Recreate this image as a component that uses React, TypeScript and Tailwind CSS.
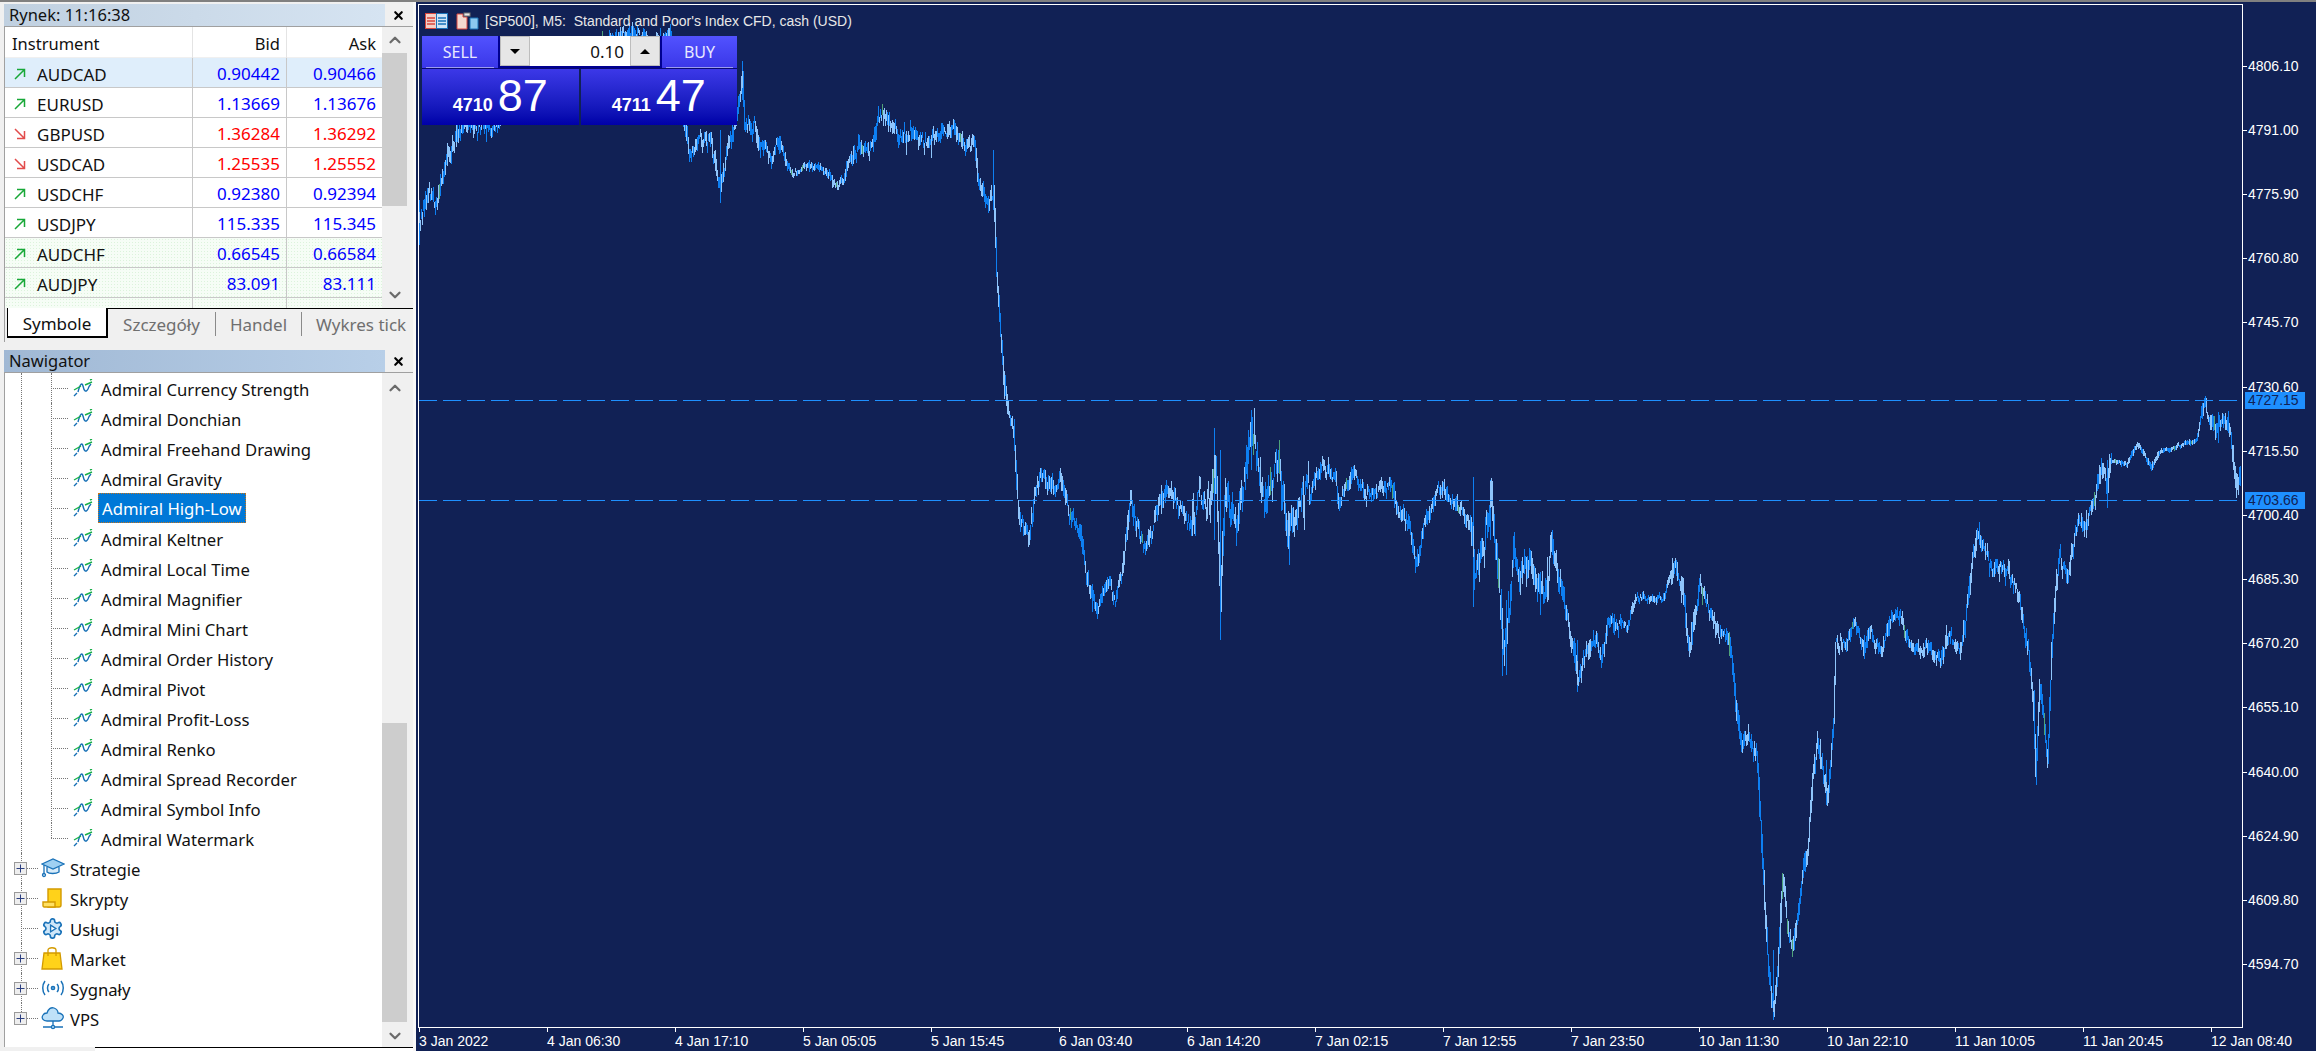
import { ChevronDown, ChevronUp, X } from "lucide-react";

type Quote = {
  symbol: string;
  bid: string;
  ask: string;
  dir: "up" | "down";
  bg?: string;
};

const dotted = "bg-[#f6fdf6] bg-[radial-gradient(#dcf3dc_1px,transparent_1px)] bg-[length:3px_3px]";

const quotes: Quote[] = [
  { symbol: "AUDCAD", bid: "0.90442", ask: "0.90466", dir: "up", bg: "bg-[#dfeefb]" },
  { symbol: "EURUSD", bid: "1.13669", ask: "1.13676", dir: "up" },
  { symbol: "GBPUSD", bid: "1.36284", ask: "1.36292", dir: "down" },
  { symbol: "USDCAD", bid: "1.25535", ask: "1.25552", dir: "down" },
  { symbol: "USDCHF", bid: "0.92380", ask: "0.92394", dir: "up" },
  { symbol: "USDJPY", bid: "115.335", ask: "115.345", dir: "up" },
  { symbol: "AUDCHF", bid: "0.66545", ask: "0.66584", dir: "up", bg: dotted },
  { symbol: "AUDJPY", bid: "83.091", ask: "83.111", dir: "up", bg: dotted },
  { symbol: "AUDNZD", bid: "1.06888", ask: "1.06868", dir: "down", bg: dotted },
];

const indicators = [
  "Admiral Currency Strength",
  "Admiral Donchian",
  "Admiral Freehand Drawing",
  "Admiral Gravity",
  "Admiral High-Low",
  "Admiral Keltner",
  "Admiral Local Time",
  "Admiral Magnifier",
  "Admiral Mini Chart",
  "Admiral Order History",
  "Admiral Pivot",
  "Admiral Profit-Loss",
  "Admiral Renko",
  "Admiral Spread Recorder",
  "Admiral Symbol Info",
  "Admiral Watermark",
];

const prices = [
  "4806.10", "4791.00", "4775.90", "4760.80", "4745.70",
  "4730.60", "4715.50", "4700.40", "4685.30", "4670.20",
  "4655.10", "4640.00", "4624.90", "4609.80", "4594.70",
];

const times = [
  "3 Jan 2022", "4 Jan 06:30", "4 Jan 17:10", "5 Jan 05:05", "5 Jan 15:45",
  "6 Jan 03:40", "6 Jan 14:20", "7 Jan 02:15", "7 Jan 12:55", "7 Jan 23:50",
  "10 Jan 11:30", "10 Jan 22:10", "11 Jan 10:05", "11 Jan 20:45", "12 Jan 08:40",
];

// price path traced from the reference, page pixels
const anchors: [number, number][] = [
  [418, 225], [421, 210], [427, 188], [435, 204], [439, 180], [445, 157], [451, 145], [458, 129],
  [466, 128], [494, 126], [510, 100], [560, 60], [600, 50], [625, 32], [650, 45], [668, 36], [684, 135],
  [688, 150], [708, 140], [715, 170], [719, 185], [725, 153], [731, 129], [739, 93], [741, 75], [743, 125],
  [753, 125], [759, 145], [771, 157], [779, 145], [785, 165], [791, 171], [810, 167], [826, 173], [834, 186],
  [842, 180], [848, 159], [858, 145], [870, 147], [876, 121], [886, 117], [897, 139], [909, 131], [919, 145],
  [933, 133], [949, 129], [961, 145], [973, 141], [976, 177], [984, 200], [992, 196], [993, 220], [995, 279],
  [999, 335], [1002, 370], [1006, 414], [1012, 430], [1014, 465], [1017, 513], [1027, 540], [1033, 497],
  [1042, 473], [1049, 493], [1058, 477], [1067, 513], [1078, 527], [1083, 567], [1087, 587], [1096, 610],
  [1107, 583], [1114, 597], [1120, 577], [1125, 540], [1129, 503], [1141, 547], [1152, 523], [1165, 483],
  [1176, 507], [1190, 527], [1196, 503], [1210, 503], [1214, 470], [1219, 585], [1223, 497], [1234, 520],
  [1243, 467], [1250, 435], [1257, 463], [1263, 497], [1277, 453], [1281, 500], [1288, 530], [1297, 503],
  [1308, 487], [1321, 463], [1333, 477], [1337, 500], [1350, 477], [1364, 497], [1388, 483], [1395, 507],
  [1408, 527], [1415, 565], [1422, 527], [1429, 503], [1440, 487], [1455, 500], [1471, 527], [1473, 575],
  [1482, 547], [1489, 495], [1496, 577], [1502, 655], [1509, 593], [1513, 553], [1522, 580], [1529, 560],
  [1542, 593], [1551, 550], [1560, 587], [1565, 618], [1571, 640], [1576, 680], [1583, 657], [1591, 637],
  [1600, 660], [1607, 623], [1625, 628], [1634, 597], [1661, 600], [1673, 561], [1681, 586], [1688, 655],
  [1694, 603], [1698, 586], [1707, 607], [1717, 637], [1727, 633], [1732, 675], [1736, 717], [1740, 750],
  [1746, 733], [1755, 760], [1759, 822], [1763, 906], [1767, 975], [1772, 1008], [1776, 969], [1781, 880],
  [1786, 927], [1792, 950], [1797, 906], [1801, 877], [1807, 843], [1811, 780], [1816, 742], [1826, 795],
  [1832, 717], [1834, 640], [1845, 641], [1853, 620], [1862, 650], [1868, 628], [1879, 655], [1889, 620],
  [1899, 616], [1908, 645], [1922, 645], [1939, 662], [1947, 633], [1958, 650], [1964, 620], [1970, 561],
  [1975, 536], [1985, 553], [1991, 578], [2000, 561], [2010, 582], [2019, 607], [2027, 650], [2032, 704],
  [2034, 770], [2038, 690], [2046, 760], [2050, 654], [2054, 590], [2058, 557], [2065, 582], [2071, 548],
  [2077, 523], [2084, 523], [2094, 494], [2100, 468], [2106, 489], [2108, 460], [2125, 464], [2136, 443],
  [2149, 468], [2157, 452], [2182, 445], [2195, 439], [2202, 403], [2214, 435], [2222, 416], [2230, 443],
  [2235, 495], [2239, 473],
];

// the long wicks that stick out of the path
const wicks: [number, number, number][] = [
  [418, 200, 245], [741, 61, 100], [719, 130, 203], [992, 150, 210], [1213, 428, 540], [1219, 450, 640],
  [1250, 410, 470], [1288, 520, 565], [1472, 477, 607], [1489, 480, 540], [1501, 640, 676], [1505, 600, 675],
  [1576, 640, 692], [1772, 950, 1020], [2035, 760, 785], [1825, 760, 805], [2106, 460, 508],
  [2241, 403, 415], [2241, 503, 515],
];

const noiseAt = (x: number) => {
  if (x > 2110 && x < 2200) return 3;
  if (x > 780 && x < 850) return 6;
  if (x > 1620 && x < 1670) return 6;
  if (x > 1840 && x < 1960) return 11;
  if (x > 1190 && x < 1310) return 30;
  if (x > 1470 && x < 1560) return 26;
  return 14;
};

const buildBars = () => {
  let seed = 5471;
  const rnd = () => {
    seed = (seed * 16807) % 2147483647;
    return seed / 2147483647;
  };
  let dark = "";
  let light = "";
  let green = "";
  let i = 0;
  let drift = 0;
  let prev = anchors[0][1];
  for (let x = 418; x < 2240; x++) {
    while (anchors[i + 1] && anchors[i + 1][0] < x) i++;
    const [x0, y0] = anchors[i];
    const [x1, y1] = anchors[i + 1] ?? anchors[i];
    const mid = x1 === x0 ? y0 : y0 + ((y1 - y0) * (x - x0)) / (x1 - x0);
    const amp = noiseAt(x);
    drift = drift * 0.55 + (rnd() - 0.5) * amp * 0.8;
    const spike = rnd() < 0.06 ? 2 : 1;
    const top = Math.min(mid, prev) + drift - rnd() * amp * 0.55 * spike - 1;
    const bot = Math.max(mid, prev) + drift + rnd() * amp * 0.55 * spike + 1;
    prev = mid;
    const seg = `M${x + 0.5} ${top.toFixed(0)}V${bot.toFixed(0)}`;
    const pick = rnd();
    if (pick < 0.015) green += seg;
    else if (pick < 0.52) dark += seg;
    else light += seg;
  }
  for (const [x, top, bot] of wicks) dark += `M${x + 0.5} ${top}V${bot}`;
  return { dark, light, green };
};

const bars = buildBars();

const Arrow = ({ dir }: { dir: "up" | "down" }) =>
  dir === "up" ? (
    <svg width="12" height="12" viewBox="0 0 12 12" fill="none" stroke="#18a838" strokeWidth="1.5" className="shrink-0">
      <path d="M1 11L10.5 1.5M3 1.5H10.5V9" />
    </svg>
  ) : (
    <svg width="12" height="12" viewBox="0 0 12 12" fill="none" stroke="#e24b4b" strokeWidth="1.5" className="shrink-0">
      <path d="M1 1L10.5 10.5M3 10.5H10.5V3" />
    </svg>
  );

const IndicatorIcon = () => (
  <svg width="20" height="18" viewBox="0 0 20 18" fill="none" className="shrink-0">
    <path d="M1 17L4 14M5 13C7 5 9 3 10 7C11 12 13 14 15 10C16 7 17 6 18 5" stroke="#156fb5" strokeWidth="1.4" />
    <path d="M1 11L8 7M12 6L19 3M17 1L19 0" stroke="#19b04a" strokeWidth="1.4" />
  </svg>
);

const CapIcon = () => (
  <svg width="24" height="20" viewBox="0 0 24 20" fill="none" stroke="#1a72b8" strokeWidth="1.3">
    <path d="M6 9V14C8 16 15 16 18 14V9" fill="#d8ecfa" />
    <path d="M1 6L12 1L23 6L12 11Z" fill="#9fd0f2" />
    <path d="M3 7V16" />
    <circle cx="3" cy="17" r="1.5" fill="#d8ecfa" />
  </svg>
);

const ScrollIcon = () => (
  <svg width="24" height="20" viewBox="0 0 24 20" fill="none" stroke="#d39a00" strokeWidth="1.4">
    <path d="M7 1H20V17C20 18 19 19 18 19H7Z" fill="#ffd21a" />
    <path d="M2 14H14V19H3C2 19 2 18 2 17Z" fill="#ffe062" />
  </svg>
);

const GearIcon = () => (
  <svg width="23" height="23" viewBox="0 0 24 24" fill="#cfe7f9" stroke="#1a72b8" strokeWidth="1.7">
    <path d="M12.22 2h-.44a2 2 0 0 0-2 2v.18a2 2 0 0 1-1 1.73l-.43.25a2 2 0 0 1-2 0l-.15-.08a2 2 0 0 0-2.73.73l-.22.38a2 2 0 0 0 .73 2.73l.15.1a2 2 0 0 1 1 1.72v.51a2 2 0 0 1-1 1.74l-.15.09a2 2 0 0 0-.73 2.73l.22.38a2 2 0 0 0 2.73.73l.15-.08a2 2 0 0 1 2 0l.43.25a2 2 0 0 1 1 1.73V20a2 2 0 0 0 2 2h.44a2 2 0 0 0 2-2v-.18a2 2 0 0 1 1-1.73l.43-.25a2 2 0 0 1 2 0l.15.08a2 2 0 0 0 2.73-.73l.22-.39a2 2 0 0 0-.73-2.73l-.15-.08a2 2 0 0 1-1-1.74v-.5a2 2 0 0 1 1-1.74l.15-.09a2 2 0 0 0 .73-2.73l-.22-.38a2 2 0 0 0-2.73-.73l-.15.08a2 2 0 0 1-2 0l-.43-.25a2 2 0 0 1-1-1.73V4a2 2 0 0 0-2-2z" />
    <path d="M10 8.5L15.5 12L10 15.5Z" fill="#fff" strokeWidth="1.4" />
  </svg>
);

const BagIcon = () => (
  <svg width="22" height="24" viewBox="0 0 22 24" fill="none" stroke="#d39a00" strokeWidth="1.3">
    <path d="M3 7H19L21 23H1Z" fill="#ffd21a" />
    <path d="M7 10V4C7 1 15 1 15 4V10" />
  </svg>
);

const SignalIcon = () => (
  <svg width="24" height="16" viewBox="0 0 24 16" fill="none" stroke="#1a72b8" strokeWidth="1.5">
    <path d="M4 1C1 5 1 11 4 15M20 1C23 5 23 11 20 15M8 4C6 6 6 10 8 12M16 4C18 6 18 10 16 12" />
    <circle cx="12" cy="8" r="1.6" fill="#7fbfee" />
  </svg>
);

const CloudIcon = () => (
  <svg width="24" height="24" viewBox="0 0 24 24" fill="none" stroke="#1a72b8" strokeWidth="1.3">
    <path d="M6 15C2 15 0 12 2 9C3 7 5 7 6 7C7 3 10 1 13 2C16 3 17 5 17 7C21 7 23 10 22 12C21 14 20 15 18 15Z" fill="#bfe1f8" />
    <path d="M12 15V20M2 21H22" />
    <circle cx="12" cy="21" r="1.6" fill="#bfe1f8" />
  </svg>
);

const PlusBox = () => (
  <svg width="13" height="13" viewBox="0 0 13 13" className="absolute left-[-7px] top-[9px]">
    <rect x="0.5" y="0.5" width="12" height="12" fill="#eeeeee" stroke="#9a9a9a" />
    <path d="M2.5 6.5H10.5M6.5 2.5V10.5" stroke="#2c3f80" strokeWidth="1" />
  </svg>
);

const Scrollbar = ({ top, thumb, bottom }: { top: string; thumb: string; bottom: string }) => (
  <div className="flex w-[26px] shrink-0 flex-col bg-[#f0f0f0] pr-[1px] text-[#6b6b6b]">
    <div className={`flex items-center justify-center ${top}`}>
      <ChevronUp size={18} strokeWidth={3} />
    </div>
    <div className={`bg-[#cdcdcd] ${thumb}`} />
    <div className={`flex items-end justify-center ${bottom}`}>
      <ChevronDown size={18} strokeWidth={3} />
    </div>
  </div>
);

const TitleBar = ({ title, bg }: { title: string; bg: string }) => (
  <div className="flex h-[22px] shrink-0 items-center">
    <div className={`flex h-full w-[381px] items-center pl-[5px] text-[16.5px] text-[#111] ${bg}`}>{title}</div>
    <div className="flex flex-1 justify-center pr-[1px]">
      <X size={13} strokeWidth={4} className="text-black" />
    </div>
  </div>
);

const MarketPanel = () => (
  <section className="flex h-[345px] shrink-0 flex-col pt-[2px]">
    <TitleBar title="Rynek: 11:16:38" bg="bg-gradient-to-r from-[#c0d0e0] to-[#d6e4f2]" />
    <div className="flex h-[282px] border-t border-l border-[#a0a0a0]">
      <div className="h-full w-[377px] overflow-hidden bg-white text-[17px]">
        <div className="grid h-[31px] grid-cols-[188px_94px_95px] items-center border-b border-[#f0f0f0] text-[16.5px] text-[#111]">
          <span className="h-full border-r border-[#e4e4e4] pl-[7px] leading-[33px]">Instrument</span>
          <span className="h-full border-r border-[#e4e4e4] pr-[6px] text-right leading-[33px]">Bid</span>
          <span className="h-full pr-[6px] text-right leading-[33px]">Ask</span>
        </div>
        {quotes.map((q) => (
          <div
            key={q.symbol}
            className={`grid h-[30px] grid-cols-[188px_94px_95px] items-center border-b border-[#c8c8c8] ${q.bg ?? ""}`}
          >
            <div className="flex h-full items-center gap-[11px] border-r border-[#c8c8c8] pl-[9px] text-[#111]">
              <Arrow dir={q.dir} />
              <span className="pt-[3px]">{q.symbol}</span>
            </div>
            <span
              className={`h-full border-r border-[#c8c8c8] pr-[6px] text-right leading-[31px] ${
                q.dir === "up" ? "text-[#0000ff]" : "text-[#ff0000]"
              }`}
            >
              {q.bid}
            </span>
            <span
              className={`h-full pr-[6px] text-right leading-[31px] ${
                q.dir === "up" ? "text-[#0000ff]" : "text-[#ff0000]"
              }`}
            >
              {q.ask}
            </span>
          </div>
        ))}
      </div>
      <Scrollbar top="h-[26px]" thumb="h-[153px]" bottom="flex-1 pb-[4px]" />
    </div>
    <div className="flex h-[34px] border-l border-[#a0a0a0] text-[17px] text-[#6f6f6f]">
      <div className="ml-[2px] flex h-[30px] w-[101px] items-center justify-center border-r-2 border-b-2 border-l border-black bg-white pt-[3px] text-[#111]">
        Symbole
      </div>
      <div className="flex h-[30px] flex-1 items-center overflow-hidden border-t border-black">
        <span className="flex h-[24px] w-[108px] shrink-0 items-center justify-center border-r border-[#8a8a8a] pt-[3px]">
          Szczegóły
        </span>
        <span className="flex h-[24px] w-[86px] shrink-0 items-center justify-center border-r border-[#8a8a8a] pt-[3px]">
          Handel
        </span>
        <span className="ml-[14px] pt-[3px] whitespace-nowrap">Wykres tick</span>
      </div>
    </div>
  </section>
);

const ChildRow = ({ name, last }: { name: string; last: boolean }) => (
  <div className="flex h-[30px] items-center pl-[16px]">
    <div className="h-full w-[30px] border-l border-dotted border-[#777]" />
    <div className="relative flex h-full w-[22px] items-center">
      <span
        className={`absolute top-0 left-0 w-0 border-l border-dotted border-[#777] ${last ? "h-1/2" : "h-full"}`}
      />
      <span className="h-0 w-[17px] border-t border-dotted border-[#777]" />
    </div>
    <IndicatorIcon />
    {name === "Admiral High-Low" ? (
      <span className="ml-[5px] h-[30px] border border-dotted border-[#c8741a] bg-[#0078d7] px-[3px] pt-[2px] leading-[26px] text-white">
        {name}
      </span>
    ) : (
      <span className="ml-[8px] pt-[4px]">{name}</span>
    )}
  </div>
);

const FolderRow = ({
  name,
  icon,
  plus = true,
  last = false,
}: {
  name: string;
  icon: React.ReactNode;
  plus?: boolean;
  last?: boolean;
}) => (
  <div className="flex h-[30px] items-center pl-[16px]">
    <div className="relative flex h-full w-[20px] items-center">
      <span
        className={`absolute top-0 left-0 w-0 border-l border-dotted border-[#777] ${last ? "h-1/2" : "h-full"}`}
      />
      <span className="h-0 w-[17px] border-t border-dotted border-[#777]" />
      {plus && <PlusBox />}
    </div>
    <div className="flex w-[29px] shrink-0 items-center">{icon}</div>
    <span className="pt-[4px]">{name}</span>
  </div>
);

const NavigatorPanel = () => (
  <section className="flex min-h-0 flex-1 flex-col pt-[3px]">
    <TitleBar title="Nawigator" bg="bg-gradient-to-r from-[#a0b8d4] to-[#b8cfe8]" />
    <div className="flex min-h-0 flex-1 border-t border-l border-[#a0a0a0]">
      <div className="w-[377px] overflow-hidden bg-white text-[16.7px] text-[#111]">
        {indicators.map((name, i) => (
          <ChildRow key={name} name={name} last={i === indicators.length - 1} />
        ))}
        <FolderRow name="Strategie" icon={<CapIcon />} />
        <FolderRow name="Skrypty" icon={<ScrollIcon />} />
        <FolderRow name="Usługi" icon={<GearIcon />} plus={false} />
        <FolderRow name="Market" icon={<BagIcon />} />
        <FolderRow name="Sygnały" icon={<SignalIcon />} />
        <FolderRow name="VPS" icon={<CloudIcon />} last />
      </div>
      <Scrollbar top="h-[350px] items-start pt-[6px]" thumb="h-[299px]" bottom="flex-1 pb-[2px]" />
    </div>
    <div className="flex h-[4px] shrink-0 pl-[91px]">
      <div className="flex-1 border-t border-black bg-white" />
    </div>
  </section>
);

const PriceBox = ({ small, big }: { small: string; big: string }) => (
  <div className="flex flex-1 items-baseline justify-center gap-[5px] bg-gradient-to-b from-[#3c38e8] to-[#0000a8] pt-[1px] font-['Liberation_Sans',sans-serif] text-white">
    <span className="text-[18px] font-bold">{small}</span>
    <span className="text-[45px] leading-[52px]">{big}</span>
  </div>
);

const TradePanel = () => (
  <div className="absolute top-[31px] left-[3px] flex w-[315px] flex-col gap-[1px] bg-[#0a0a70] font-['Noto_Sans',sans-serif]">
    <div className="flex h-[32px] justify-between bg-[#112155]">
      <div className="w-[76px] bg-gradient-to-b from-[#5252ff] to-[#3a36e8] px-[4px] text-center text-[16px] leading-[33px] text-[#e8e8ff]">
        <div className="h-full border-b border-[#9c9cf0]">SELL</div>
      </div>
      <div className="flex h-[32px] w-[164px] bg-[#000090] px-[2px] pb-[2px] text-[#111]">
        <div className="flex w-[30px] items-center justify-center border border-[#bdbdbd] bg-[#e6e6e6]">
          <span className="h-0 w-0 border-x-[5px] border-t-[5px] border-x-transparent border-t-black" />
        </div>
        <div className="flex-1 bg-white pr-[6px] text-right text-[17px] leading-[31px]">0.10</div>
        <div className="flex w-[30px] items-center justify-center border border-[#bdbdbd] bg-[#e6e6e6]">
          <span className="h-0 w-0 border-x-[5px] border-b-[5px] border-x-transparent border-b-black" />
        </div>
      </div>
      <div className="w-[75px] bg-gradient-to-b from-[#5252ff] to-[#3a36e8] px-[4px] text-center text-[16px] leading-[33px] text-[#e8e8ff]">
        <div className="h-full border-b border-[#9c9cf0]">BUY</div>
      </div>
    </div>
    <div className="flex h-[56px] gap-[2px] bg-[#112155]">
      <PriceBox small="4710" big="87" />
      <PriceBox small="4711" big="47" />
    </div>
  </div>
);

const ChartTitle = () => (
  <div className="absolute top-[7px] left-[6px] flex h-[18px] items-center gap-[8px] text-[14px] whitespace-pre text-[#e8e8e8]">
    <svg width="23" height="16" viewBox="0 0 23 16">
      <rect x="0.5" y="0.5" width="11" height="15" fill="#f4d0c8" stroke="#d8453c" />
      <rect x="11.5" y="0.5" width="11" height="15" fill="#cfe4f6" stroke="#1a72b8" />
      <path d="M2 5H10M2 8H10M2 11H10" stroke="#d8453c" strokeWidth="1.5" />
      <path d="M13 5H21M13 8H21M13 11H21" stroke="#1a72b8" strokeWidth="1.5" />
    </svg>
    <svg width="23" height="18" viewBox="0 0 23 18">
      <path d="M1 2H7V5H11V17H1Z" fill="#f4d8d0" stroke="#d8453c" />
      <path d="M14 6H22V17H14Z" fill="#8cc8f0" stroke="#1a72b8" />
      <rect x="8" y="1" width="6" height="3" fill="#e8e8e8" stroke="#777" />
    </svg>
    <span className="ml-[-2px]">{"[SP500], M5:  Standard and Poor's Index CFD, cash (USD)"}</span>
  </div>
);

const ChartArea = () => (
  <main className="flex min-w-0 flex-1 flex-col border-l-3 border-[#f8f8f8] bg-[#112155] pt-[2px] pl-[2px] font-['Liberation_Sans',sans-serif] text-white">
    <div className="flex min-h-0 flex-1">
      <div className="relative min-w-0 flex-1 overflow-hidden border border-white">
        <svg width="1824" height="1022" viewBox="418 5 1824 1022" fill="none" className="block">
          <path d={bars.dark} stroke="#0d7ff2" shapeRendering="crispEdges" />
          <path d={bars.light} stroke="#8fc5fb" shapeRendering="crispEdges" />
          <path d={bars.green} stroke="#4fa37a" shapeRendering="crispEdges" />
          <line x1="418" x2="2242" y1="400.5" y2="400.5" stroke="#1e90ff" strokeDasharray="18 6" />
          <line x1="418" x2="2242" y1="500.5" y2="500.5" stroke="#1e90ff" strokeDasharray="18 6" />
        </svg>
        <ChartTitle />
        <TradePanel />
      </div>
      <div className="relative flex w-[73px] shrink-0 flex-col pt-[30px] text-[14px]">
        {prices.map((p) => (
          <div key={p} className="flex h-[64.2px] shrink-0 items-center">
            <span className="mr-px h-px w-[4px] bg-white" />
            <span>{p}</span>
          </div>
        ))}
        <span className="absolute top-[388px] left-[2px] h-[17px] w-[60px] bg-[#1e8fff] pl-[3px] text-[14px] leading-[17px] text-[#112155]">
          4727.15
        </span>
        <span className="absolute top-[488px] left-[2px] h-[17px] w-[60px] bg-[#1e8fff] pl-[3px] text-[14px] leading-[17px] text-[#112155]">
          4703.66
        </span>
      </div>
    </div>
    <div className="flex h-[23px] shrink-0 pl-px text-[14px]">
      {times.map((t) => (
        <div key={t} className="flex w-[128px] shrink-0 flex-col items-start">
          <span className="h-[4px] w-px shrink-0 bg-white" />
          <span className="leading-[19px] whitespace-nowrap">{t}</span>
        </div>
      ))}
    </div>
  </main>
);

export default function App() {
  return (
    <div className="flex h-screen w-full flex-col overflow-hidden bg-[#f0f0f0] font-['Noto_Sans','Open_Sans',sans-serif]">
      <div className="h-[2px] shrink-0 bg-[#808080]" />
      <div className="flex min-h-0 flex-1">
        <aside className="flex w-[413px] shrink-0 flex-col pl-[4px]">
          <MarketPanel />
          <NavigatorPanel />
        </aside>
        <ChartArea />
      </div>
    </div>
  );
}
